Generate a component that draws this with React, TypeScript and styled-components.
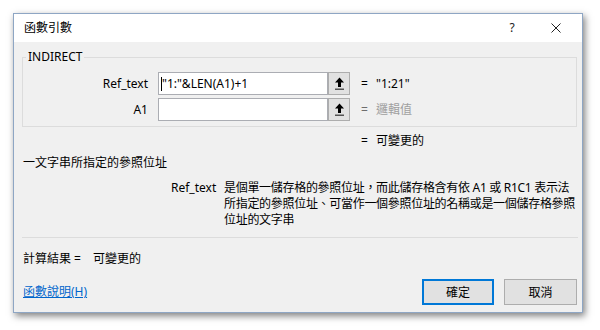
import React from 'react';
import styled, { createGlobalStyle } from 'styled-components';

const GlobalStyle = createGlobalStyle`
  html, body {
    margin: 0;
    padding: 0;
    background: #ffffff;
  }
  body {
    font-family: "Noto Sans", "Noto Sans CJK TC", sans-serif;
    font-size: 12px;
    color: #000;
  }
`;

const Page = styled.div`
  width: 600px;
  height: 330px;
  padding: 13px 0 0 13px;
  box-sizing: border-box;
`;

const Window = styled.div`
  width: 570px;
  height: 300px;
  box-sizing: border-box;
  border: 1px solid #8ea6c4;
  background: #f0f0f0;
  box-shadow: 2px 3px 7px rgba(0, 0, 0, 0.5);
  display: flex;
  flex-direction: column;
`;

const TitleBar = styled.div`
  height: 28px;
  background: #ffffff;
  display: flex;
  align-items: center;
  padding: 0 16px 0 10px;
  line-height: 16px;
`;

const Title = styled.span`
  flex: 1;
`;

const TitleButton = styled.span`
  display: flex;
  align-items: center;
  justify-content: center;
  width: 20px;
  margin-left: 24px;
  color: #222;
`;

const Body = styled.div`
  flex: 1;
  display: flex;
  flex-direction: column;
  padding: 0 5px 7px 8px;
  line-height: 16px;
`;

const GroupBox = styled.fieldset`
  margin: 7px 0 0 0;
  padding: 7px 0 5px 0;
  min-width: 0;
  border: 1px solid #dcdcdc;
`;

const GroupLegend = styled.legend`
  margin-left: 3px;
  padding: 0 2px;
  line-height: 16px;
`;

const ArgGrid = styled.div`
  display: grid;
  grid-template-columns: 135px 170px 22px auto;
  grid-auto-rows: 23px;
  row-gap: 3px;
  align-items: center;
`;

const ArgLabel = styled.span`
  text-align: right;
  padding-right: 10px;
`;

const ArgInput = styled.div`
  height: 23px;
  box-sizing: border-box;
  border: 1px solid #abadb3;
  background: #fff;
  display: flex;
  align-items: center;
  padding-left: 2px;
  white-space: nowrap;
  overflow: hidden;
`;

const Caret = styled.span`
  display: inline-block;
  width: 1px;
  height: 14px;
  background: #000;
`;

const RefButton = styled.div`
  height: 23px;
  box-sizing: border-box;
  border: 1px solid #adadad;
  background: #e1e1e1;
  display: flex;
  align-items: center;
  justify-content: center;
`;

const ArgValue = styled.div<{ $muted?: boolean }>`
  display: flex;
  align-items: center;
  margin-left: 11px;
  color: ${(p) => (p.$muted ? '#a0a0a0' : '#000')};
  white-space: nowrap;
`;

const Eq = styled.span<{ $muted?: boolean }>`
  width: 8px;
  margin-right: 7px;
  color: ${(p) => (p.$muted ? '#6d6d6d' : '#000')};
`;

const ResultRow = styled.div`
  margin-top: 6px;
  padding-left: 339px;
  display: flex;
  align-items: center;
  white-space: nowrap;
`;

const Summary = styled.div`
  margin-top: 6px;
  padding-left: 1px;
`;

const HelpBlock = styled.div`
  margin-top: 9px;
  display: grid;
  grid-template-columns: 53px auto;
  padding-left: 149px;
`;

const HelpLine = styled.span`
  display: block;
  white-space: nowrap;
  letter-spacing: -0.3px;
`;

const Separator = styled.div`
  margin-top: 9px;
  height: 1px;
  background: #dcdcdc;
  margin-right: -1px;
`;

const FormulaResult = styled.div`
  margin-top: 13px;
  padding-left: 1px;
  display: flex;
  white-space: nowrap;
`;

const FormulaLabel = styled.span`
  width: 70px;
`;

const Footer = styled.div`
  margin-top: 12px;
  display: flex;
  align-items: center;
`;

const HelpLink = styled.a`
  flex: 1;
  padding-left: 1px;
  color: #0066cc;
  text-decoration: underline;
  cursor: pointer;
`;

const DialogButton = styled.button<{ $primary?: boolean }>`
  width: ${(p) => (p.$primary ? '72px' : '73px')};
  height: 26px;
  margin-left: ${(p) => (p.$primary ? '0' : '10px')};
  box-sizing: border-box;
  background: #e1e1e1;
  border: 1px solid ${(p) => (p.$primary ? '#0078d7' : '#adadad')};
  box-shadow: ${(p) => (p.$primary ? 'inset 0 0 0 1px #0078d7' : 'none')};
  font-family: "Noto Sans", "Noto Sans CJK TC", sans-serif;
  font-size: 12px;
  color: #000;
  padding: 0;
`;

const RefIcon = () => (
  <svg width="11" height="14" viewBox="0 0 11 14">
    <path d="M5.5 0.5 L10 5.5 H7 V10 H4 V5.5 H1 Z" fill="#000" />
    <rect x="1" y="11.5" width="9" height="1.5" fill="#555" />
  </svg>
);

const CloseIcon = () => (
  <svg width="10" height="10" viewBox="0 0 10 10">
    <path d="M0.5 0.5 L9.5 9.5 M9.5 0.5 L0.5 9.5" stroke="#222" strokeWidth="1" />
  </svg>
);

interface Arg {
  name: string;
  formula: string;
  value: string;
  muted?: boolean;
}

const args: Arg[] = [
  { name: 'Ref_text', formula: '"1:"&LEN(A1)+1', value: '"1:21"' },
  { name: 'A1', formula: '', value: '邏輯值', muted: true },
];

const App: React.FC = () => {
  return (
    <Page>
      <GlobalStyle />
      <Window>
        <TitleBar>
          <Title>函數引數</Title>
          <TitleButton>?</TitleButton>
          <TitleButton>
            <CloseIcon />
          </TitleButton>
        </TitleBar>
        <Body>
          <GroupBox>
            <GroupLegend>INDIRECT</GroupLegend>
            <ArgGrid>
              {args.map((arg, i) => (
                <React.Fragment key={arg.name}>
                  <ArgLabel>{arg.name}</ArgLabel>
                  <ArgInput>
                    {i === 0 && <Caret />}
                    {arg.formula}
                  </ArgInput>
                  <RefButton>
                    <RefIcon />
                  </RefButton>
                  <ArgValue $muted={arg.muted}>
                    <Eq $muted={arg.muted}>=</Eq>
                    {arg.value}
                  </ArgValue>
                </React.Fragment>
              ))}
            </ArgGrid>
          </GroupBox>
          <ResultRow>
            <Eq>=</Eq>
            可變更的
          </ResultRow>
          <Summary>一文字串所指定的參照位址</Summary>
          <HelpBlock>
            <span>Ref_text</span>
            <div>
              <HelpLine>是個單一儲存格的參照位址，而此儲存格含有依 A1 或 R1C1 表示法</HelpLine>
              <HelpLine>所指定的參照位址、可當作一個參照位址的名稱或是一個儲存格參照</HelpLine>
              <HelpLine>位址的文字串</HelpLine>
            </div>
          </HelpBlock>
          <Separator />
          <FormulaResult>
            <FormulaLabel>計算結果 =</FormulaLabel>
            可變更的
          </FormulaResult>
          <Footer>
            <HelpLink>函數說明(H)</HelpLink>
            <DialogButton $primary>確定</DialogButton>
            <DialogButton>取消</DialogButton>
          </Footer>
        </Body>
      </Window>
    </Page>
  );
};

export default App;
